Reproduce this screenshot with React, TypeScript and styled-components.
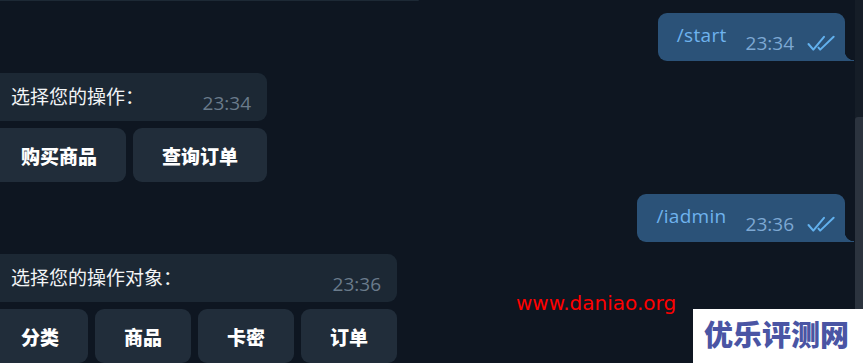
import React from 'react'
import styled, { createGlobalStyle } from 'styled-components'

const GlobalStyle = createGlobalStyle`
	html, body {
		margin: 0;
		padding: 0;
		background: #0e1621;
	}
`;

const BG = '#0e1621';
const OUT = '#2b5278';

interface OutgoingProps {
	text: string;
	time: string;
}
const Outgoing = ({text, time}: OutgoingProps) => (
	<OutRow>
		<OutBubble>
			<Command>{text}</Command>
			<OutTime>{time}</OutTime>
			<Checks />
		</OutBubble>
	</OutRow>
);

const Checks = () => (
	<CheckIcon width="28" height="17" viewBox="0 0 28 17">
		<path d="M1.5 9 L6.3 14.6 L17 1.8" />
		<path d="M11.5 12.6 L13.2 14.6 L26.6 1.8" />
	</CheckIcon>
);

interface IncomingProps {
	text: string;
	time: string;
	width: number;
	buttons: string[];
}
const Incoming = ({text, time, width, buttons}: IncomingProps) => (
	<InGroup $width={width}>
		<InBubble>
			<InText>{text}</InText>
			<InTime>{time}</InTime>
		</InBubble>
		<Keyboard $cols={buttons.length}>
			{buttons.map((b) => <KeyButton key={b}>{b}</KeyButton>)}
		</Keyboard>
	</InGroup>
);

const App = () => {
	return (
		<Screen>
			<GlobalStyle />
			<Chat>
				<PrevStrip />
				<Outgoing text="/start" time="23:34" />
				<Incoming text="选择您的操作：" time="23:34" width={275} buttons={['购买商品', '查询订单']} />
				<Outgoing text="/iadmin" time="23:36" />
				<Incoming text="选择您的操作对象：" time="23:36" width={405} buttons={['分类', '商品', '卡密', '订单']} />
			</Chat>
			<ScrollTrack>
				<ScrollThumb />
			</ScrollTrack>
			<SiteMark>www.daniao.org</SiteMark>
			<Badge>优乐评测网</Badge>
		</Screen>
	);
}

const Screen = styled.div`
	position: relative;
	width: 863px;
	height: 363px;
	overflow: hidden;
	display: flex;
	background: ${BG};
	font-family: "Open Sans", "Noto Sans CJK SC", sans-serif;
`;

const Chat = styled.div`
	flex: 1;
	display: flex;
	flex-direction: column;
	min-width: 0;
`;

const PrevStrip = styled.div`
	margin-left: -8px;
	width: 427px;
	height: 2px;
	background: #1d2935;
	border-bottom-right-radius: 4px;
`;

const OutRow = styled.div`
	display: flex;
	justify-content: flex-end;
	padding-right: 10px;
	margin-top: 12px;
`;

const OutBubble = styled.div`
	position: relative;
	display: flex;
	align-items: flex-end;
	height: 48px;
	box-sizing: border-box;
	padding: 10px 10px 8px 19px;
	background: ${OUT};
	border-radius: 9px 9px 0 9px;

	&::after {
		content: '';
		position: absolute;
		right: -9px;
		bottom: 0;
		width: 9px;
		height: 10px;
		background: radial-gradient(circle at 100% 0, transparent 9px, ${OUT} 9.5px);
	}
`;

const Command = styled.span`
	align-self: flex-start;
	font-size: 19px;
	line-height: 25px;
	letter-spacing: 0.3px;
	color: #6fb3ee;
	margin-right: 19px;
`;

const OutTime = styled.span`
	font-size: 19px;
	line-height: 20px;
	color: #7da8d3;
	margin-right: 13px;
`;

const CheckIcon = styled.svg`
	margin-bottom: 1px;
	fill: none;
	stroke: #62b1ee;
	stroke-width: 2;
	stroke-linecap: round;
	stroke-linejoin: round;
`;

const InGroup = styled.div<{ $width: number }>`
	margin-left: -8px;
	width: ${p => p.$width}px;
	margin-top: 12px;
`;

const InBubble = styled.div`
	display: flex;
	justify-content: space-between;
	align-items: flex-end;
	height: 48px;
	box-sizing: border-box;
	padding: 10px 16px 8px 19px;
	background: #1c2834;
	border-radius: 9px;
`;

const InText = styled.span`
	align-self: flex-start;
	font-family: "Noto Sans CJK SC", sans-serif;
	font-size: 19px;
	line-height: 25px;
	color: #f2f4f6;
`;

const InTime = styled.span`
	font-size: 19px;
	line-height: 20px;
	color: #6a7b8b;
`;

const Keyboard = styled.div<{ $cols: number }>`
	display: grid;
	grid-template-columns: repeat(${p => p.$cols}, 1fr);
	gap: 7px;
	margin-top: 7px;
`;

const KeyButton = styled.div`
	display: flex;
	align-items: center;
	justify-content: center;
	height: 54px;
	border-radius: 9px;
	background: #212d3a;
	font-family: "Noto Sans CJK SC", sans-serif;
	font-weight: 900;
	font-size: 19px;
	color: #ffffff;
`;

const ScrollTrack = styled.div`
	width: 8px;
	display: flex;
	flex-direction: column;
	justify-content: flex-end;
	background: #151d27;
`;

const ScrollThumb = styled.div`
	height: 246px;
	background: #2b333e;
	border-top-left-radius: 3px;
`;

const SiteMark = styled.div`
	position: absolute;
	left: 516px;
	top: 293px;
	font-family: "DejaVu Sans", sans-serif;
	font-size: 20px;
	line-height: 20px;
	color: #ff0000;
`;

const Badge = styled.div`
	position: absolute;
	left: 693px;
	top: 309px;
	right: 0;
	bottom: 0;
	box-sizing: border-box;
	padding: 10px 0 0 11px;
	background: #ffffff;
	font-family: "Noto Sans CJK SC", sans-serif;
	font-weight: 900;
	font-size: 29px;
	line-height: 29px;
	color: #4a55a4;
`;

export default App
